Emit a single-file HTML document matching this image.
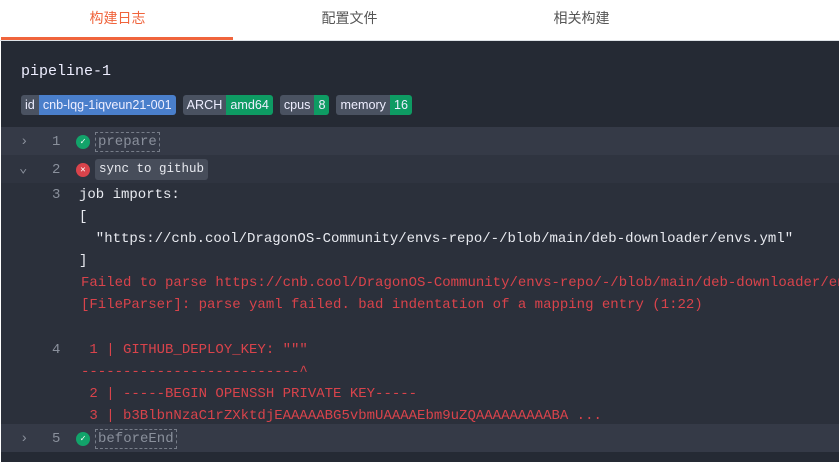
<!DOCTYPE html>
<html><head><meta charset="utf-8"><style>
*{margin:0;padding:0;box-sizing:border-box}
html,body{width:839px;height:462px;overflow:hidden}
body{background:#fff;font-family:"Liberation Sans","Noto Sans CJK SC",sans-serif;position:relative}
.tabs{height:41px;position:relative;border-bottom:1px solid #dde1e6}
.tab{position:absolute;top:8px;width:233px;text-align:center;font-size:14px;color:#555}
.tab.a{color:#f0643c}
.ul{position:absolute;left:1px;top:37px;width:232px;height:3px;background:#f0643c}
.dark{position:absolute;left:1px;top:41px;width:838px;height:421px;background:#252a34}
.mono{font-family:"Liberation Mono","DejaVu Sans Mono",monospace}
.title{position:absolute;left:20px;top:22px;color:#eef;font-size:15px}
.tags{position:absolute;left:20px;top:54px;display:flex;gap:7px;font-size:12.6px}
.tag{display:flex;border-radius:3px;overflow:hidden;height:20px;line-height:20px}
.tag span{padding:0 4px;color:#eef}
.k{background:#4a5261}
.rows{position:absolute;left:0;top:86px;width:838px;height:325px;background:#2b303b}
.row{position:absolute;left:0;width:838px;height:28px}
.clip{position:absolute;left:0;top:0;width:839px;height:462px;overflow:hidden}
.l{position:absolute;font-size:14px;white-space:pre;line-height:22px}
.w{color:#e8eaf0}.r{color:#d9434b}.g{color:#8a909c}
.ic{position:absolute;width:14px;height:14px;border-radius:50%;color:#fff;font-size:9px;text-align:center;line-height:14px}
</style></head><body>
<div class="tabs">
<div class="tab a" style="left:1px">构建日志</div>
<div class="tab" style="left:233px">配置文件</div>
<div class="tab" style="left:465px">相关构建</div>
<div class="ul"></div>
</div>
<div class="dark">
<div class="title mono">pipeline-1</div>
<div class="tags">
<div class="tag"><span class="k">id</span><span style="background:#4a7fcb">cnb-lqg-1iqveun21-001</span></div>
<div class="tag"><span class="k">ARCH</span><span style="background:#0e9b63">amd64</span></div>
<div class="tag"><span class="k">cpus</span><span style="background:#0e9b63">8</span></div>
<div class="tag"><span class="k">memory</span><span style="background:#0e9b63">16</span></div>
</div>
<div class="rows">
<div class="row" style="top:0;background:#353a47"></div>
<div class="row" style="top:28px;background:#2f3440"></div>
<div class="row" style="top:297px;background:#353a47"></div>
</div>
</div>
<div class="mono clip">
<div class="l g" style="left:20px;top:131px">›</div>
<div class="l g" style="left:52px;top:131px">1</div>
<div class="ic" style="left:76px;top:135px;background:#12a36a">✓</div>
<div class="l g" style="left:95px;top:132px;border:1px dashed #777d89;line-height:18px;padding:0 2px">prepare</div>
<div class="l g" style="left:19px;top:158px">⌄</div>
<div class="l g" style="left:52px;top:159px">2</div>
<div class="ic" style="left:76px;top:163px;background:#d9434b">✕</div>
<div class="l w" style="left:95px;top:159px;background:#474d5a;border-radius:3px;padding:0 4px;line-height:21px;font-size:12.5px">sync to github</div>
<div class="l g" style="left:52px;top:184px">3</div>
<div class="l w" style="left:79px;top:184px">job imports:
[
  "https://cnb.cool/DragonOS-Community/envs-repo/-/blob/main/deb-downloader/envs.yml"
]</div>
<div class="l r" style="left:81px;top:272px">Failed to parse https://cnb.cool/DragonOS-Community/envs-repo/-/blob/main/deb-downloader/envs.yml
[FileParser]: parse yaml failed. bad indentation of a mapping entry (1:22)</div>
<div class="l g" style="left:52px;top:339px">4</div>
<div class="l r" style="left:81px;top:339px"> 1 | GITHUB_DEPLOY_KEY: """
--------------------------^
 2 | -----BEGIN OPENSSH PRIVATE KEY-----
 3 | b3BlbnNzaC1rZXktdjEAAAAABG5vbmUAAAAEbm9uZQAAAAAAAAABA ...</div>
<div class="l g" style="left:20px;top:428px">›</div>
<div class="l g" style="left:52px;top:428px">5</div>
<div class="ic" style="left:76px;top:432px;background:#12a36a">✓</div>
<div class="l g" style="left:95px;top:429px;border:1px dashed #777d89;line-height:18px;padding:0 2px">beforeEnd</div>
</div>
</body></html>
